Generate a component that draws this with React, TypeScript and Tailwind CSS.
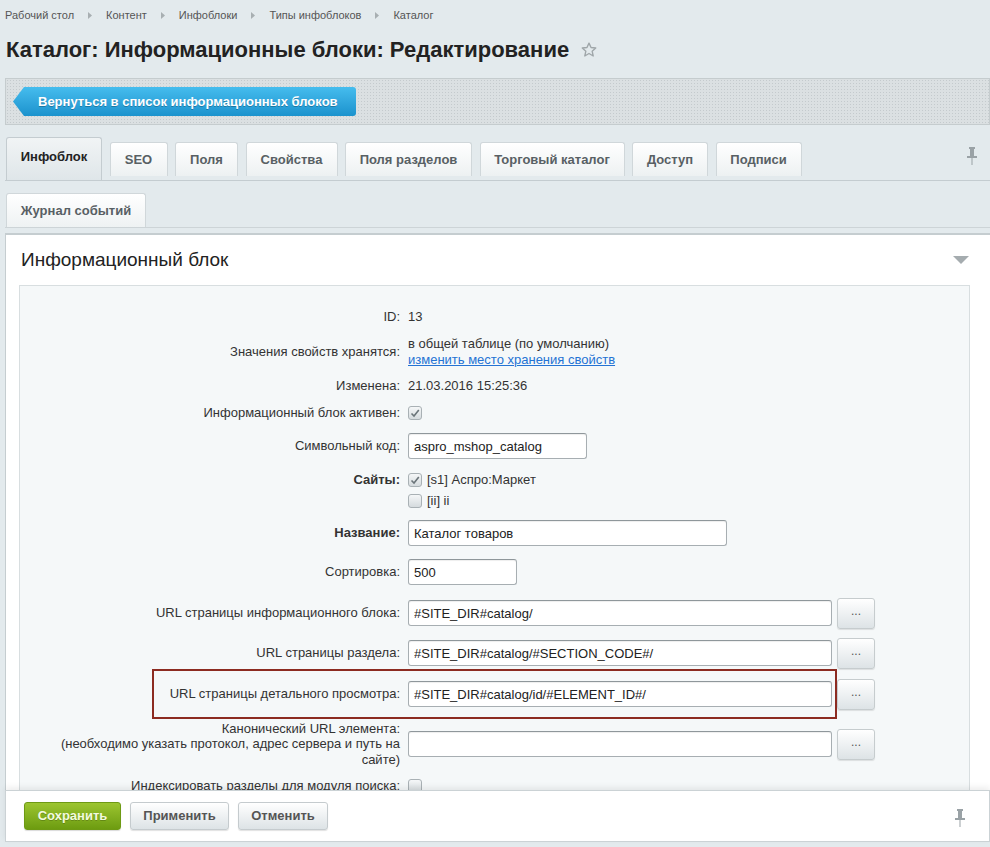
import React from 'react';

const font = { fontFamily: '"Liberation Sans", Arial, sans-serif' };

const crumbs = ['Рабочий стол', 'Контент', 'Инфоблоки', 'Типы инфоблоков', 'Каталог'];

const tabs = [
  { name: 'Инфоблок', w: 'w-[96px]', active: true },
  { name: 'SEO', w: 'w-[58px]' },
  { name: 'Поля', w: 'w-[63px]' },
  { name: 'Свойства', w: 'w-[92px]' },
  { name: 'Поля разделов', w: 'w-[127px]' },
  { name: 'Торговый каталог', w: 'w-[145px]' },
  { name: 'Доступ', w: 'w-[76px]' },
  { name: 'Подписи', w: 'w-[86px]' },
];

const Pin: React.FC = () => (
  <svg width="12" height="18" viewBox="0 0 12 18">
    <rect x="3" y="0" width="6" height="2" fill="#9aa2a6" />
    <rect x="4" y="2" width="4" height="7" fill="#9aa2a6" />
    <rect x="1" y="9" width="10" height="2" fill="#9aa2a6" />
    <rect x="5.5" y="11" width="1" height="7" fill="#9aa2a6" />
  </svg>
);

const Checkbox: React.FC<{ checked?: boolean }> = ({ checked }) => (
  <span className="w-[14px] h-[14px] rounded-[3px] border border-[#a9b1b5] bg-gradient-to-b from-[#f5f7f8] to-[#d5dbde] flex items-center justify-center shrink-0">
    {checked && (
      <svg width="12" height="12" viewBox="0 0 12 12">
        <path d="M2.5 6.5 L5 9 L9.8 3" stroke="#6b757a" strokeWidth="1.6" fill="none" />
      </svg>
    )}
  </span>
);

const Input: React.FC<{ value: string; w: string }> = ({ value, w }) => (
  <input
    readOnly
    value={value}
    className={`${w} h-[26px] rounded-[3px] border border-[#a7aeb2] border-t-[#8f979b] bg-white px-[5px] text-[13px] text-[#222] outline-none shadow-[inset_0_1px_1px_rgba(0,0,0,0.07)]`}
  />
);

const DotsButton: React.FC = () => (
  <button className="ml-[5px] w-[38px] h-[31px] rounded-[3px] border border-[#c6ccce] bg-gradient-to-b from-white to-[#dde3e6] text-[12px] text-[#555] leading-none pb-[4px] shadow-[0_1px_1px_rgba(0,0,0,0.1)]">
    ...
  </button>
);

const Row: React.FC<{ h: string; label: React.ReactNode; bold?: boolean; children?: React.ReactNode; className?: string }> = ({
  h,
  label,
  bold,
  children,
  className = '',
}) => (
  <div className={`flex items-center ${h} ${className}`}>
    <div className={`w-[380px] shrink-0 text-right text-[13px] text-[#333] ${bold ? 'font-bold' : ''}`}>{label}</div>
    <div className="ml-[8px] flex items-center text-[13px] text-[#333]">{children}</div>
  </div>
);

const App: React.FC = () => {
  return (
    <div style={font} className="w-[990px] h-[847px] overflow-hidden bg-[#e3eaed] flex flex-col">
      {/* breadcrumbs */}
      <div className="pt-[8px] pl-[5px] h-[22px] flex items-center gap-[14px] text-[11px] leading-[14px] text-[#555]">
        {crumbs.map((c, i) => (
          <React.Fragment key={c}>
            {i > 0 && (
              <svg width="4" height="7" viewBox="0 0 4 7">
                <path d="M0 0 L4 3.5 L0 7 Z" fill="#a8afb2" />
              </svg>
            )}
            <span>{c}</span>
          </React.Fragment>
        ))}
      </div>

      {/* title */}
      <div className="mt-[16px] h-[24px] pl-[6px] flex items-center gap-[11px]">
        <h1 className="text-[22px] leading-[24px] font-bold text-[#222]">Каталог: Информационные блоки: Редактирование</h1>
        <svg width="18" height="18" viewBox="0 0 24 24">
          <path
            d="M12 2.8 L14.7 8.7 L21 9.3 L16.2 13.6 L17.6 20 L12 16.7 L6.4 20 L7.8 13.6 L3 9.3 L9.3 8.7 Z"
            fill="none"
            stroke="#9fa6a9"
            strokeWidth="1.8"
            strokeLinejoin="round"
          />
        </svg>
      </div>

      {/* toolbar */}
      <div className="mt-[16px] ml-[5px] h-[47px] shrink-0 border border-[#c5ccce] bg-[#dbe0e2] bg-[image:radial-gradient(#c4cacd_0.8px,transparent_0.8px)] bg-[size:3px_3px] flex items-center pl-[7px]">
        <div className="h-[29px] w-[343px] rounded-r-[3px] bg-gradient-to-b from-[#45bdee] to-[#1a92cd] [clip-path:polygon(11px_0,100%_0,100%_100%,11px_100%,0_50%)] flex items-center pl-[25px] text-[13px] font-bold text-white [text-shadow:0_1px_0_rgba(0,0,0,0.25)]">
          Вернуться в список информационных блоков
        </div>
      </div>

      {/* tabs */}
      <div className="ml-[5px] pt-[12px] h-[56px] shrink-0 flex items-start gap-[7.5px] pl-[1px] border-b border-[#c4ccd0]">
        {tabs.map(t =>
          t.active ? (
            <div
              key={t.name}
              className={`${t.w} h-[43px] rounded-t-[3px] border border-b-0 border-[#c4ccd0] bg-gradient-to-b from-[#f1f4f5] to-[#dfe6e9] flex items-center justify-center pb-[4px] text-[13px] font-bold text-[#222]`}
            >
              {t.name}
            </div>
          ) : (
            <div
              key={t.name}
              className={`${t.w} mt-[5px] h-[34px] rounded-t-[3px] border border-b-0 border-[#d0d7da] bg-gradient-to-b from-white to-[#edf1f2] flex items-center justify-center text-[13px] font-bold text-[#586064]`}
            >
              {t.name}
            </div>
          )
        )}
        <div className="ml-auto mr-[12px] mt-[10px]">
          <Pin />
        </div>
      </div>

      <div className="ml-[5px] pt-[12px] h-[47px] shrink-0 flex items-start pl-[1px] border-b border-[#cdd4d7]">
        <div className="w-[140px] h-[34px] rounded-t-[3px] border border-b-0 border-[#d0d7da] bg-gradient-to-b from-white to-[#eef2f3] flex items-center justify-center text-[13px] font-bold text-[#586064]">
          Журнал событий
        </div>
      </div>

      {/* main panel */}
      <div className="mt-[5px] ml-[5px] flex-1 min-h-0 overflow-hidden bg-white border-l border-t-2 border-[#c5cdd0] pl-[13px] pr-[20px]">
        <div className="h-[50px] flex items-center justify-between pl-[2px] pr-[1px]">
          <h2 className="text-[19px] text-[#222]">Информационный блок</h2>
          <svg width="16" height="8" viewBox="0 0 16 8">
            <path d="M0 0 H16 L8 8 Z" fill="#a5acaf" />
          </svg>
        </div>

        <div className="border border-[#d8dee0] bg-[#f5f8f9] pt-[18px]">
          <Row h="h-[26px]" label="ID:">13</Row>
          <Row h="h-[44px]" label="Значения свойств хранятся:">
            <div className="leading-[16px]">
              <div>в общей таблице (по умолчанию)</div>
              <div className="text-[#2473d4] underline">изменить место хранения свойств</div>
            </div>
          </Row>
          <Row h="h-[24px]" label="Изменена:">21.03.2016 15:25:36</Row>
          <Row h="h-[30px]" label="Информационный блок активен:">
            <Checkbox checked />
          </Row>
          <Row h="h-[36px]" label="Символьный код:">
            <Input value="aspro_mshop_catalog" w="w-[179px]" />
          </Row>
          <div className="flex items-start h-[48px] pt-[5px]">
            <div className="w-[380px] shrink-0 text-right text-[13px] leading-[21px] font-bold text-[#333]">Сайты:</div>
            <div className="ml-[8px] text-[13px] text-[#333]">
              <div className="h-[21px] flex items-center gap-[5px]">
                <Checkbox checked />
                <span>[s1] Аспро:Маркет</span>
              </div>
              <div className="h-[21px] flex items-center gap-[5px]">
                <Checkbox />
                <span>[ii] ii</span>
              </div>
            </div>
          </div>
          <Row h="h-[42px]" label="Название:" bold>
            <Input value="Каталог товаров" w="w-[319px]" />
          </Row>
          <Row h="h-[36px]" label="Сортировка:">
            <Input value="500" w="w-[109px]" />
          </Row>
          <Row h="h-[46px]" label="URL страницы информационного блока:">
            <Input value="#SITE_DIR#catalog/" w="w-[424px]" />
            <DotsButton />
          </Row>
          <Row h="h-[34px]" label="URL страницы раздела:">
            <Input value="#SITE_DIR#catalog/#SECTION_CODE#/" w="w-[424px]" />
            <DotsButton />
          </Row>
          <div className="relative">
            <Row h="h-[48px]" label="URL страницы детального просмотра:">
              <Input value="#SITE_DIR#catalog/id/#ELEMENT_ID#/" w="w-[424px]" />
              <DotsButton />
            </Row>
            <div className="absolute left-[132px] top-[-1px] w-[685px] h-[50px] border-2 border-[#8c2b21] pointer-events-none" />
          </div>
          <Row
            h="h-[52px]"
            label={
              <div className="leading-[15.5px]">
                Канонический URL элемента:
                <br />
                (необходимо указать протокол, адрес сервера и путь на
                <br />
                сайте)
              </div>
            }
          >
            <Input value="" w="w-[424px]" />
            <DotsButton />
          </Row>
          <Row h="h-[32px]" label="Индексировать разделы для модуля поиска:">
            <Checkbox />
          </Row>
          <div className="h-[40px]" />
        </div>
      </div>

      {/* footer */}
      <div className="relative ml-[5px] h-[52px] shrink-0 bg-white border border-[#cbd2d5] shadow-[0_-3px_6px_rgba(0,0,0,0.07)] flex items-center pl-[18px] gap-[9px]">
        <button className="w-[97px] h-[28px] rounded-[3px] border border-[#6e9a14] bg-gradient-to-b from-[#9cc52f] to-[#6d9c10] text-[13px] font-bold text-[#f3fadf] [text-shadow:0_1px_0_rgba(0,0,0,0.2)] shadow-[0_1px_1px_rgba(0,0,0,0.15)]">
          Сохранить
        </button>
        <button className="w-[99px] h-[28px] rounded-[3px] border border-[#c5cbce] bg-gradient-to-b from-white to-[#dde3e6] text-[13px] font-bold text-[#555] shadow-[0_1px_1px_rgba(0,0,0,0.12)]">
          Применить
        </button>
        <button className="w-[90px] h-[28px] rounded-[3px] border border-[#c5cbce] bg-gradient-to-b from-white to-[#dde3e6] text-[13px] font-bold text-[#555] shadow-[0_1px_1px_rgba(0,0,0,0.12)]">
          Отменить
        </button>
        <div className="ml-auto mr-[23px] mt-[4px]">
          <Pin />
        </div>
      </div>
      <div className="h-[5px] shrink-0" />
    </div>
  );
};

export default App;
